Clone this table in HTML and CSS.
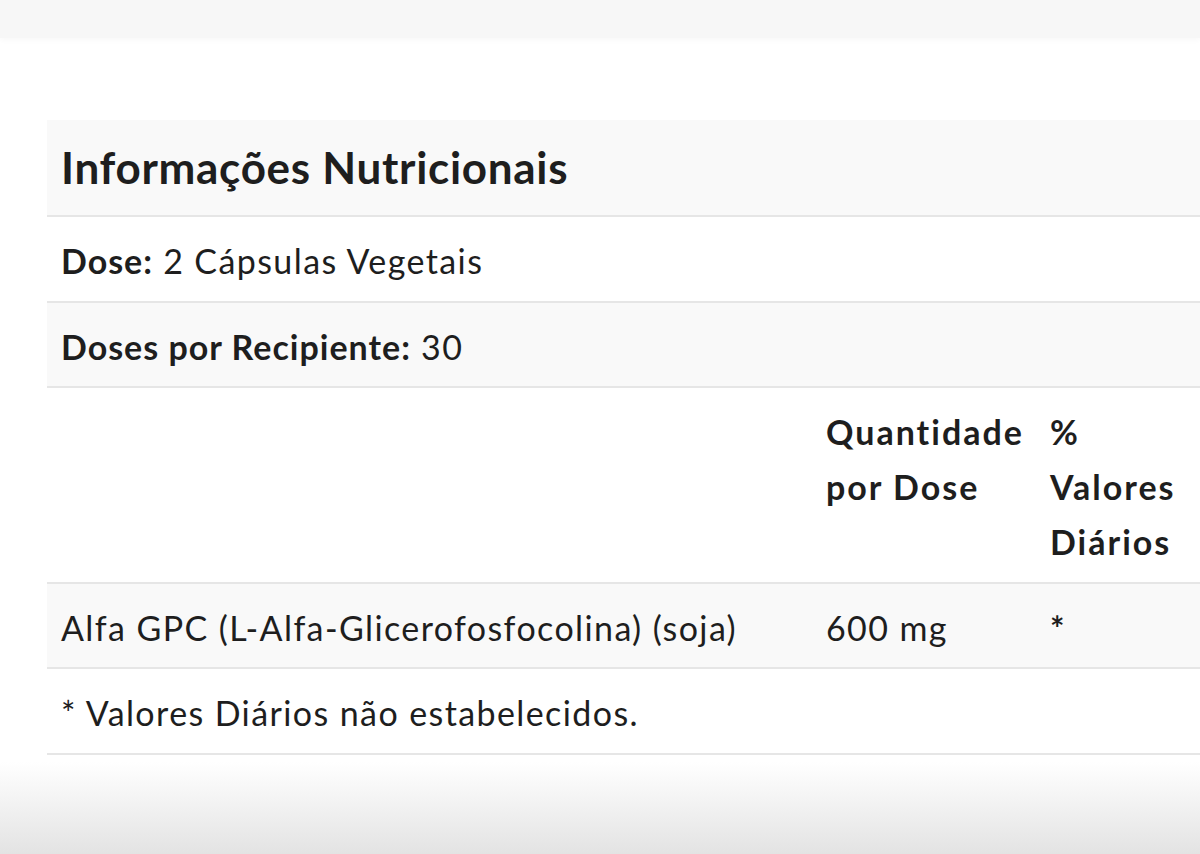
FILE: index.html
```html
<!DOCTYPE html>
<html lang="pt">
<head>
<meta charset="utf-8">
<title>Informações Nutricionais</title>
<link rel="stylesheet" href="styles.css">
</head>
<body>
<div class="topbar"></div>
<main class="content">
  <table class="nutri">
    <colgroup>
      <col class="c1">
      <col class="c2">
      <col class="c3">
    </colgroup>
    <tbody>
      <tr class="shade title-row">
        <th colspan="3" class="title">Informações Nutricionais</th>
      </tr>
      <tr>
        <td colspan="3"><strong>Dose:</strong> 2 Cápsulas Vegetais</td>
      </tr>
      <tr class="shade">
        <td colspan="3"><strong>Doses por Recipiente:</strong> 30</td>
      </tr>
      <tr class="head-row">
        <td></td>
        <th class="col2">Quantidade por Dose</th>
        <th class="col3">% Valores Diários</th>
      </tr>
      <tr class="shade">
        <td>Alfa GPC (L-Alfa-Glicerofosfocolina) (soja)</td>
        <td class="col2">600 mg</td>
        <td class="col3 star">*</td>
      </tr>
      <tr>
        <td colspan="3">* Valores Diários não estabelecidos.</td>
      </tr>
    </tbody>
  </table>
</main>
<div class="bottom-fade"></div>
</body>
</html>
```

FILE: styles.css
```css
html, body {
  margin: 0;
  padding: 0;
}
body {
  width: 1200px;
  height: 854px;
  overflow: hidden;
  background: #ffffff;
  font-family: "Lato", "Open Sans", sans-serif;
  color: #1e1e1e;
  position: relative;
}
.topbar {
  height: 38px;
  background: #f7f7f7;
  box-shadow: 0 2px 6px rgba(0,0,0,0.03);
}
.content {
  padding-top: 82px;
  padding-left: 47px;
}
.nutri {
  border-collapse: collapse;
  table-layout: fixed;
  width: 1190px;
  font-size: 34px;
  line-height: 55px;
  letter-spacing: 1.4px;
}
.c1 { width: 764px; }
.c2 { width: 225px; }
.c3 { width: 201px; }
.nutri td, .nutri th {
  padding: 16px 10px 12.5px 14px;
  text-align: left;
  vertical-align: top;
  border-bottom: 2px solid #e6e6e6;
  font-weight: 400;
}
.nutri th { font-weight: 700; letter-spacing: 2px; }
.nutri strong { font-weight: 700; letter-spacing: 1px; }
.shade { background: #f9f9f9; }
.nutri .title {
  font-size: 44px;
  line-height: 65px;
  letter-spacing: 0.7px;
  padding-top: 15px;
  padding-bottom: 15px;
}
.nutri .col2 { padding-left: 15px; padding-right: 4px; }
.nutri .col3 { padding-left: 14px; padding-right: 50px; }
.nutri .star { font-weight: 700; }
.bottom-fade {
  position: absolute;
  left: 0;
  right: 0;
  bottom: 0;
  height: 92px;
  background: linear-gradient(to bottom, rgba(226,226,226,0) 0%, #e3e3e3 100%);
}
```
